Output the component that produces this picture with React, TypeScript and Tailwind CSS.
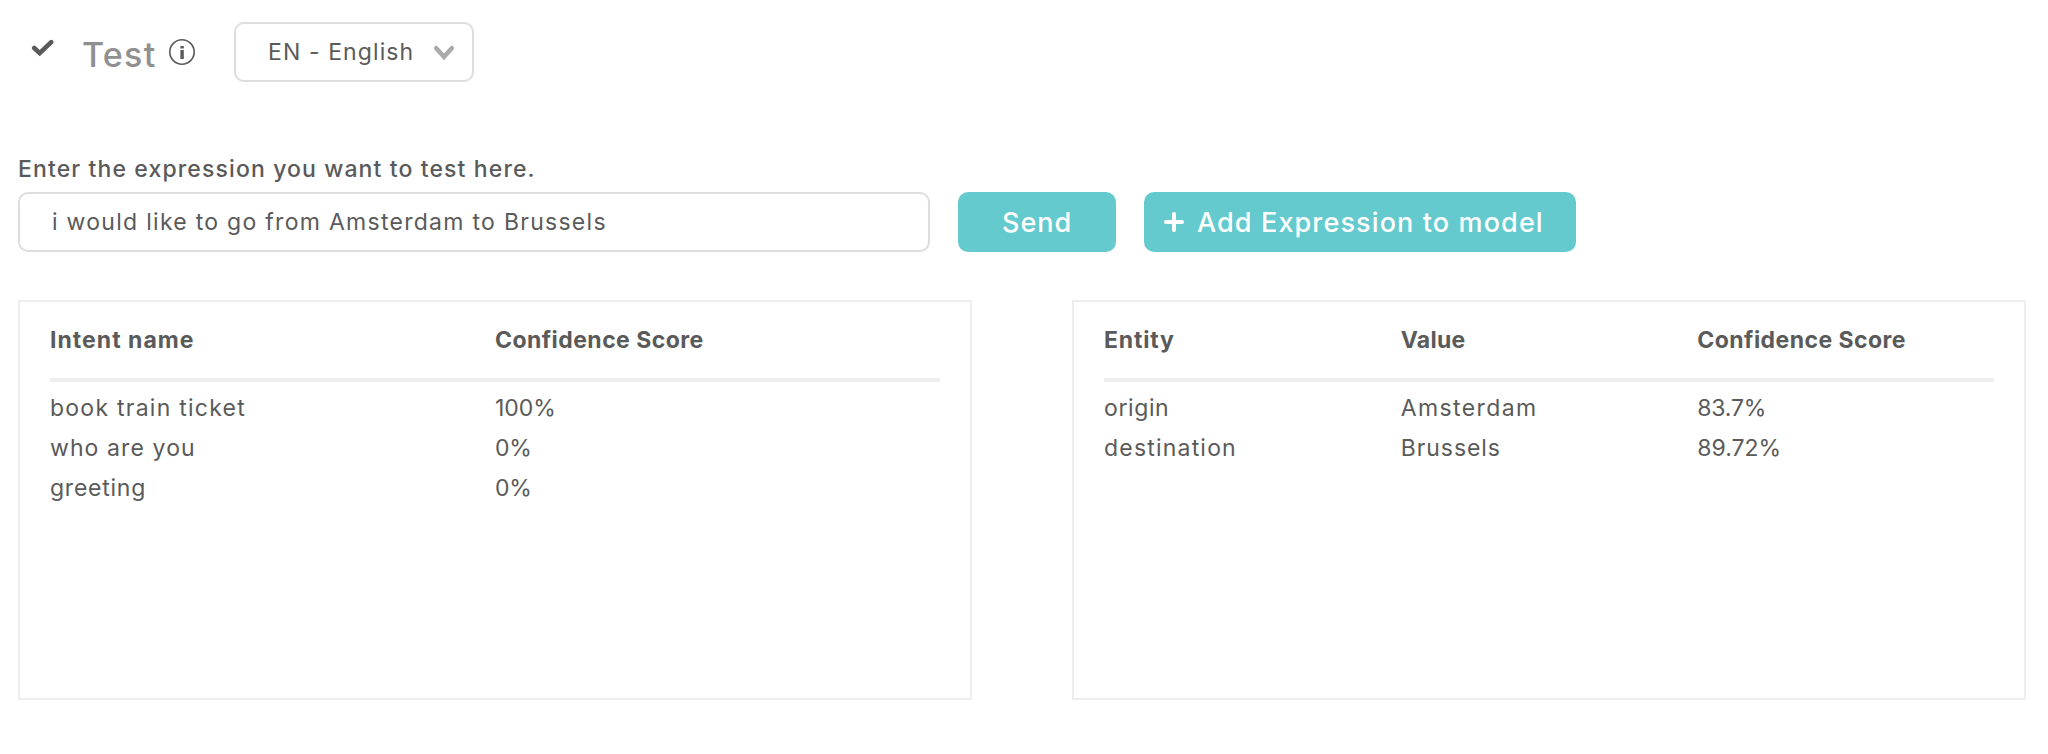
type Cell = { text: string; className: string };

const intentHead: Cell[] = [
  { text: 'Intent name', className: 'tracking-[1.03px]' },
  { text: 'Confidence Score', className: 'tracking-[0.45px]' },
];
const intentRows: Cell[][] = [
  [
    { text: 'book train ticket', className: 'tracking-[1.25px]' },
    { text: '100%', className: 'tracking-normal' },
  ],
  [
    { text: 'who are you', className: 'tracking-[1.1px]' },
    { text: '0%', className: 'tracking-[-0.3px]' },
  ],
  [
    { text: 'greeting', className: 'tracking-[0.75px]' },
    { text: '0%', className: 'tracking-[-0.3px]' },
  ],
];

const entityHead: Cell[] = [
  { text: 'Entity', className: 'tracking-[0.85px]' },
  { text: 'Value', className: 'tracking-[0.3px]' },
  { text: 'Confidence Score', className: 'tracking-[0.45px]' },
];
const entityRows: Cell[][] = [
  [
    { text: 'origin', className: 'tracking-[0.6px]' },
    { text: 'Amsterdam', className: 'tracking-[1.4px]' },
    { text: '83.7%', className: 'tracking-[-0.2px]' },
  ],
  [
    { text: 'destination', className: 'tracking-[1.2px]' },
    { text: 'Brussels', className: 'tracking-[0.95px]' },
    { text: '89.72%', className: 'tracking-normal' },
  ],
];

function ResultPanel({ head, rows, columns }: { head: Cell[]; rows: Cell[][]; columns: string }) {
  return (
    <section className="h-[400px] w-[954px] border-2 border-[#eeeeee] px-[30px]">
      <div className={`grid h-20 border-b-4 border-[#eeeeee] pt-px font-bold leading-[75px] ${columns}`}>
        {head.map((cell) => (
          <div key={cell.text} className={cell.className}>{cell.text}</div>
        ))}
      </div>
      <div className="pt-1.5">
        {rows.map((row) => (
          <div key={row[0].text} className={`grid h-10 leading-[41px] ${columns}`}>
            {row.map((cell) => (
              <div key={cell.text} className={cell.className}>{cell.text}</div>
            ))}
          </div>
        ))}
      </div>
    </section>
  );
}

export default function App() {
  return (
    <main className="h-[754px] w-[2048px] overflow-hidden whitespace-nowrap bg-white px-[18px] pt-[22px] font-['Inter','Liberation_Sans',sans-serif] text-[23px] text-[#5a5a5a]">
      <header className="flex h-[60px] items-center">
        <svg className="mb-2 ml-3 h-6 w-6" viewBox="0 0 24 24" fill="none" stroke="#5a5a5a" strokeWidth="4.6" strokeLinecap="round">
          <path d="M4.2 12 9.7 17.2 21.2 6.2" />
        </svg>
        <h1 className="ml-7 mt-1.5 w-[85px] text-[34px] font-medium leading-[40px] tracking-[1.3px] text-[#909090]">Test</h1>
        <svg className="h-7 w-7" viewBox="0 0 28 28" fill="none">
          <circle cx="15" cy="14" r="12.2" stroke="#5a5a5a" strokeWidth="1.6" />
          <path d="M13.4 7.9H16.8V10.4H13.4ZM13.4 12H16.8V20.9H13.4Z" fill="#5a5a5a" />
        </svg>
        <button type="button" className="ml-[39px] flex h-[60px] w-60 items-center rounded-[10px] border-2 border-[#dddddd] pl-8 pr-4 text-left">
          <span className="grow pt-px tracking-[1.1px]">EN - English</span>
          <svg className="h-6 w-6" viewBox="0 0 24 24" fill="none" stroke="#ababab" strokeWidth="4.6" strokeLinecap="round">
            <path d="M4.2 8.2 12 16.8 19.8 8.2" />
          </svg>
        </button>
      </header>

      <form className="pt-[71px]">
        <label htmlFor="expression" className="block h-[39px] pt-px font-medium leading-[30px] tracking-[1.12px]">
          Enter the expression you want to test here.
        </label>
        <div className="flex h-[60px]">
          <input
            id="expression"
            readOnly
            value="i would like to go from Amsterdam to Brussels"
            className="w-[912px] rounded-[10px] border-2 border-[#dddddd] px-8 pt-px tracking-[1.28px]"
          />
          <button type="button" className="ml-7 w-[158px] rounded-[10px] bg-[#64cace] pl-[44px] pt-[3px] text-left text-[27px] font-medium tracking-[1px] text-white">
            Send
          </button>
          <button type="button" className="ml-7 flex w-[432px] items-center rounded-[10px] bg-[#64cace] pl-[18px] pt-[3px] text-[27px] font-medium tracking-[1.12px] text-white">
            <svg className="mb-[3px] mr-[11px] h-6 w-6" viewBox="0 0 24 24" fill="none" stroke="currentColor" strokeWidth="4" strokeLinecap="round">
              <path d="M12 4V20M4 12H20" />
            </svg>
            Add Expression to model
          </button>
        </div>
      </form>

      <div className="flex gap-[100px] pt-12">
        <ResultPanel head={intentHead} rows={intentRows} columns="grid-cols-2" />
        <ResultPanel head={entityHead} rows={entityRows} columns="grid-cols-3" />
      </div>
    </main>
  );
}
